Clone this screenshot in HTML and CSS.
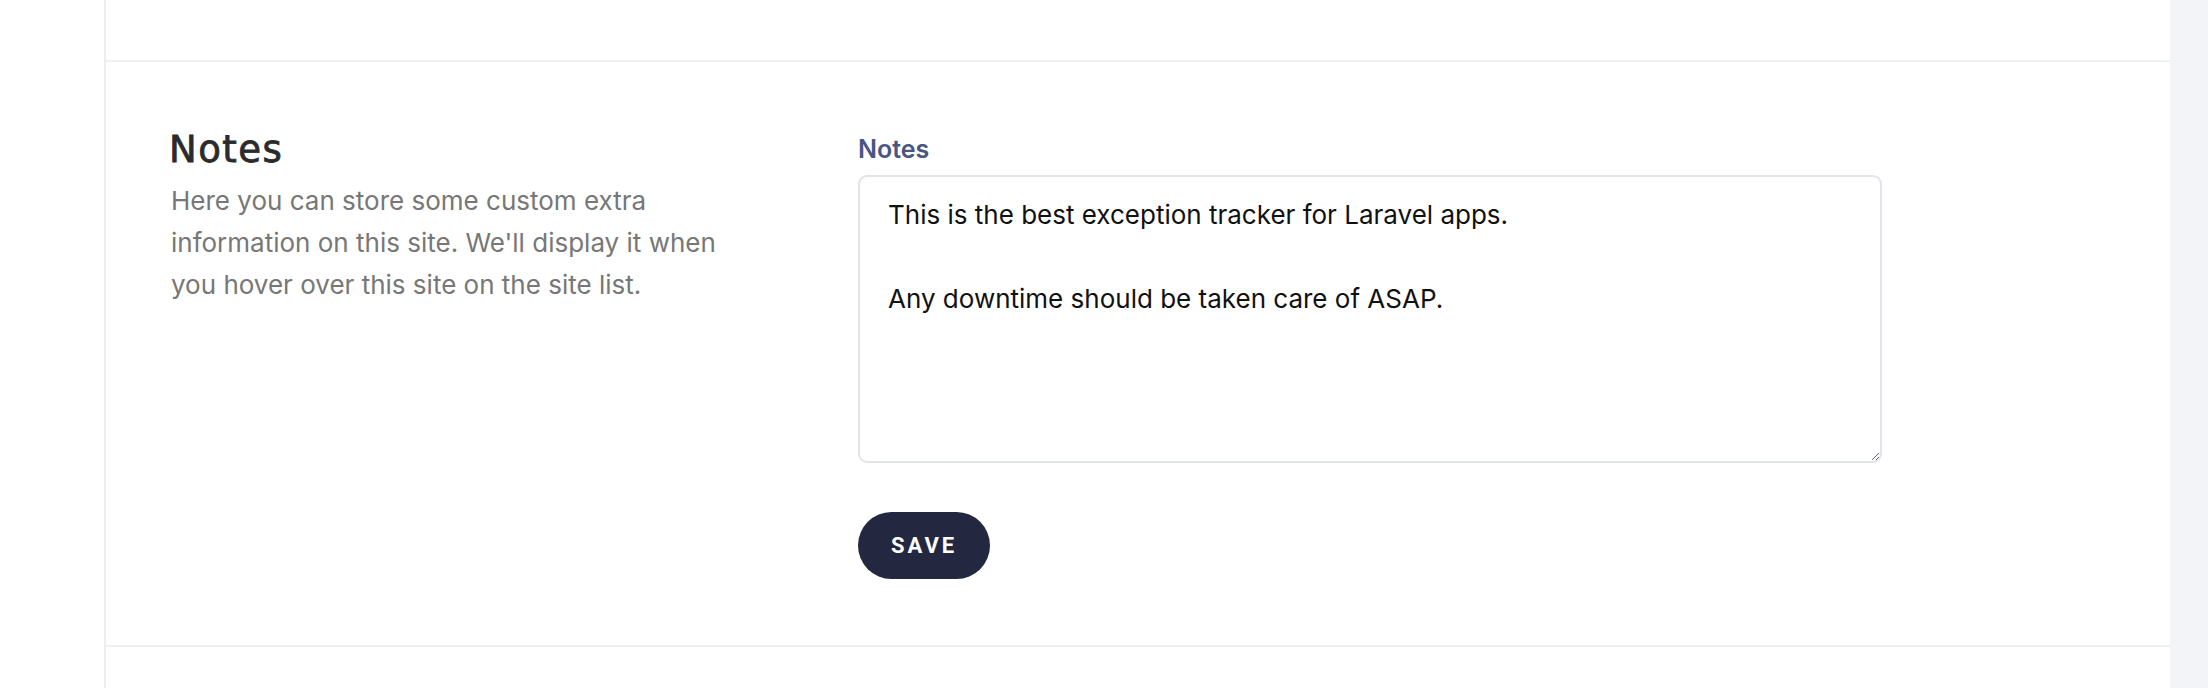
FILE: index.html
```html
<!DOCTYPE html>
<html lang="en">
<head>
<meta charset="UTF-8">
<meta name="viewport" content="width=device-width, initial-scale=1.0">
<title>Site settings - Notes</title>
<link rel="stylesheet" href="styles.css">
</head>
<body>

<div class="layout">
    <div class="gutter"></div>

    <div class="card">
        <div class="card-top"></div>

        <section class="settings-section">
            <div class="section-info">
                <h2>Notes</h2>
                <p>Here you can store some custom extra information on this site. We'll display it when you hover over this site on the site list.</p>
            </div>

            <form class="section-form" id="notesForm">
                <label for="notes">Notes</label>
                <textarea id="notes" name="notes">This is the best exception tracker for Laravel apps.

Any downtime should be taken care of ASAP.</textarea>
                <button type="button">Save</button>
            </form>
        </section>

        <div class="card-bottom"></div>
    </div>
</div>

</body>
</html>
```

FILE: styles.css
```css
body {
    margin: 0;
    padding: 0;
    background-color: #f3f4f8;
    font-family: Inter, "Liberation Sans", sans-serif;
}

.layout {
    display: grid;
    grid-template-columns: 104px 2066px;
    min-height: 688px;
}

.gutter {
    background-color: #fff;
}

.card {
    background-color: #fff;
    border-left: 2px solid #eceef2;
}

.card-top {
    height: 60px;
    border-bottom: 2px solid #eef0f4;
}

.settings-section {
    display: flex;
    padding: 66px 65px 0 63px;
    height: 517px;
    border-bottom: 2px solid #eef0f4;
}

.section-info {
    width: 689px;
    flex-shrink: 0;
}

.section-info h2 {
    margin: 0;
    font-family: "DejaVu Sans", sans-serif;
    font-weight: 400;
    font-size: 37px;
    line-height: 44px;
    letter-spacing: 1.5px;
    -webkit-text-stroke: 0.8px #2b2b2b;
    color: #2b2b2b;
}

.section-info p {
    margin: 8px 0 0 2px;
    max-width: 580px;
    font-size: 26px;
    line-height: 42px;
    color: #777;
}

.section-form {
    display: flex;
    flex-direction: column;
    align-items: flex-start;
    padding-top: 5px;
}

label {
    display: block;
    margin-bottom: 10px;
    font-size: 25px;
    font-weight: 600;
    line-height: 32px;
    color: #475683;
}

textarea {
    box-sizing: border-box;
    width: 1024px;
    height: 288px;
    padding: 17px 28px;
    border: 2px solid #e1e4ea;
    border-radius: 9px;
    font-family: Inter, "Liberation Sans", sans-serif;
    font-size: 26px;
    line-height: 42px;
    color: #111;
    resize: vertical;
}

button {
    margin-top: 49px;
    height: 67px;
    padding: 0 33px;
    background-color: #23273f;
    color: #fff;
    border: none;
    border-radius: 34px;
    font-family: Roboto, sans-serif;
    font-weight: 700;
    font-size: 22px;
    letter-spacing: 3px;
    text-transform: uppercase;
    cursor: pointer;
}
```
